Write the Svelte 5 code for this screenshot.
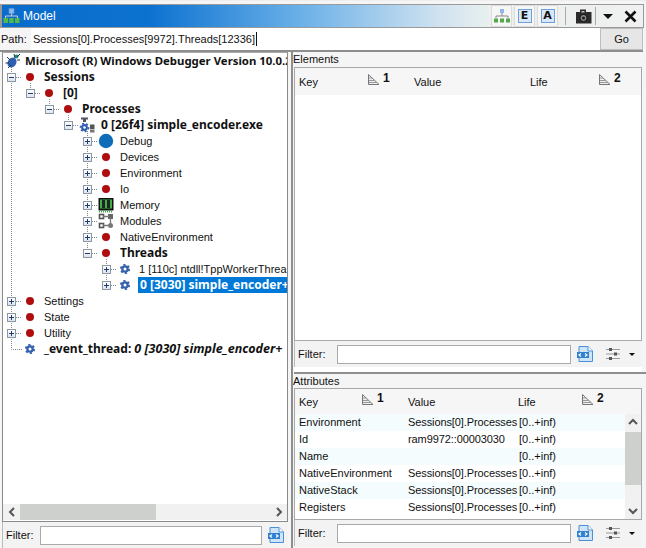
<script lang="ts">
	type Node = { label: string; depth: number; toggle?: '+' | '-'; icon: string; bold?: boolean; selected?: boolean };

	const tree: Node[] = [
		{ label: 'Sessions', depth: 0, toggle: '-', icon: 'dot', bold: true },
		{ label: '[0]', depth: 1, toggle: '-', icon: 'dot', bold: true },
		{ label: 'Processes', depth: 2, toggle: '-', icon: 'dot', bold: true },
		{ label: '0 [26f4] simple_encoder.exe', depth: 3, toggle: '-', icon: 'process', bold: true },
		{ label: 'Debug', depth: 4, toggle: '+', icon: 'bigdot' },
		{ label: 'Devices', depth: 4, toggle: '+', icon: 'dot' },
		{ label: 'Environment', depth: 4, toggle: '+', icon: 'dot' },
		{ label: 'Io', depth: 4, toggle: '+', icon: 'dot' },
		{ label: 'Memory', depth: 4, toggle: '+', icon: 'chip' },
		{ label: 'Modules', depth: 4, toggle: '+', icon: 'modules' },
		{ label: 'NativeEnvironment', depth: 4, toggle: '+', icon: 'dot' },
		{ label: 'Threads', depth: 4, toggle: '-', icon: 'dot', bold: true },
		{ label: '1 [110c] ntdll!TppWorkerThrea', depth: 5, toggle: '+', icon: 'gear' },
		{ label: '0 [3030] simple_encoder+', depth: 5, toggle: '+', icon: 'gear', bold: true, selected: true },
		{ label: 'Settings', depth: 0, toggle: '+', icon: 'dot' },
		{ label: 'State', depth: 0, toggle: '+', icon: 'dot' },
		{ label: 'Utility', depth: 0, toggle: '+', icon: 'dot' }
	];

	const attrs = [
		['Environment', 'Sessions[0].Processes'],
		['Id', 'ram9972::00003030'],
		['Name', ''],
		['NativeEnvironment', 'Sessions[0].Processes'],
		['NativeStack', 'Sessions[0].Processes'],
		['Registers', 'Sessions[0].Processes']
	];
</script>

{#snippet sortIcon()}
	<svg class="sort" width="13" height="13" viewBox="0 0 13 13">
		<path d="M1.5 1.5V11.5H12L1.5 1.5Z" fill="#eee" stroke="#777" />
		<path d="M2 5H5M2 7.5H8M2 9.5H10" stroke="#999" />
	</svg>
{/snippet}

{#snippet filterIcon()}
	<svg width="18" height="18" viewBox="0 0 18 18">
		<path d="M3 1.5H12L16.5 6V16.5H3Z" fill="#cfe4f7" stroke="#4a90d9" />
		<path d="M12 1.5V6H16.5" fill="#fff" stroke="#4a90d9" />
		<rect x="1" y="7" width="12" height="6" fill="#2f80d0" />
		<path d="M5 8.5L3 10L5 11.5M9 8.5L11 10L9 11.5" fill="none" stroke="#fff" stroke-width="1.2" />
	</svg>
{/snippet}

{#snippet filterBar(extra: boolean)}
	<div class="filter" class:wide={extra}>
		<span class="filter-label">Filter:</span>
		<div class="filter-input"></div>
		<span class="filter-btn">{@render filterIcon()}</span>
		{#if extra}
			<svg class="sliders" width="16" height="14" viewBox="0 0 16 14">
				<path d="M1 2.5H15M1 7H15M1 11.5H15" stroke="#9a9a9a" stroke-width="1.2" />
				<rect x="4" y="1" width="3" height="3" fill="#555" />
				<rect x="9" y="5.5" width="3" height="3" fill="#555" />
				<rect x="4" y="10" width="3" height="3" fill="#555" />
			</svg>
			<span class="caret"></span>
		{/if}
	</div>
{/snippet}

{#snippet nodeIcon(kind: string)}
	{#if kind === 'dot'}
		<svg class="ic" width="16" height="16" viewBox="0 0 16 16"><circle cx="8" cy="8" r="4" fill="#b00d0d" /></svg>
	{:else if kind === 'bigdot'}
		<svg class="ic" width="16" height="16" viewBox="0 0 16 16"><circle cx="8" cy="8" r="7.2" fill="#0f6cb8" /></svg>
	{:else if kind === 'gear'}
		<svg class="ic" width="16" height="16" viewBox="0 0 16 16">
			<circle cx="8" cy="8" r="3.8" fill="#3460ad" />
			<circle cx="8" cy="8" r="4.2" fill="none" stroke="#3460ad" stroke-width="1.8" stroke-dasharray="2.2 2.2" />
			<circle cx="8" cy="8" r="1.5" fill="#fff" />
		</svg>
	{:else if kind === 'chip'}
		<svg class="ic" width="16" height="16" viewBox="0 0 16 16">
			<rect x="0.5" y="1" width="15" height="12.5" fill="#111" />
			<rect x="2" y="2.5" width="12" height="9" fill="#3fae49" />
			<rect x="4" y="3" width="3" height="8" fill="#222" />
			<rect x="9" y="3" width="3" height="8" fill="#222" />
			<path d="M1 14.5H15" stroke="#3fae49" stroke-dasharray="1 1" stroke-width="2" />
		</svg>
	{:else if kind === 'modules'}
		<svg class="ic" width="16" height="16" viewBox="0 0 16 16">
			<rect x="1.5" y="1.5" width="4" height="4" fill="#fff" stroke="#555" stroke-width="1.6" />
			<rect x="1.5" y="10.5" width="4" height="4" fill="#fff" stroke="#555" stroke-width="1.6" />
			<rect x="10" y="1" width="5" height="5" fill="#666" />
			<circle cx="12.5" cy="12.5" r="2.5" fill="#777" />
			<path d="M5 3.5H11M12.5 5V11M5 12.5H10" stroke="#777" stroke-width="1.3" />
		</svg>
	{:else if kind === 'process'}
		<svg class="ic" width="16" height="16" viewBox="0 0 16 16">
			<path d="M2 0.5H9V2.5H7V5H4V2.5H2Z" fill="#556" />
			<circle cx="5.5" cy="10.5" r="3.4" fill="#2f5fb0" />
			<circle cx="5.5" cy="10.5" r="4" fill="none" stroke="#2f5fb0" stroke-width="1.6" stroke-dasharray="2 2" />
			<circle cx="5.5" cy="10.5" r="1.3" fill="#fff" />
			<rect x="11" y="7.5" width="4.5" height="4.5" fill="#555" />
			<rect x="11" y="12.5" width="4.5" height="3" fill="#777" />
		</svg>
	{/if}
{/snippet}

<div class="window">
	<header class="titlebar">
		<svg class="title-icon" width="17" height="16" viewBox="0 0 17 16">
			<rect x="6" y="0.5" width="5" height="5" fill="#8fb8ea" stroke="#5d8fd0" stroke-width="0.6" />
			<path d="M8.5 5.5V8M2.5 10V8H14.5V10" fill="none" stroke="#ccd" />
			<rect x="0.5" y="10" width="4.5" height="5" fill="#55b84a" />
			<rect x="6.2" y="10" width="4.5" height="5" fill="#55b84a" />
			<rect x="12" y="10" width="4.5" height="5" fill="#55b84a" />
		</svg>
		<span class="title">Model</span>
		<div class="tools">
			<button class="tool" aria-label="Tree">
				<svg width="18" height="16" viewBox="0 0 18 16">
					<rect x="7" y="1" width="4" height="4" fill="#8fb8ea" />
					<path d="M9 5V8M3 10V8H15V10" fill="none" stroke="#888" />
					<rect x="1" y="10.5" width="4" height="4" fill="#55a84a" />
					<rect x="7" y="10.5" width="4" height="4" fill="#55a84a" />
					<rect x="13" y="10.5" width="4" height="4" fill="#55a84a" />
				</svg>
			</button>
			<button class="tool"><span class="letter">E</span></button>
			<button class="tool"><span class="letter">A</span></button>
			<i class="sep"></i>
			<svg class="camera" width="17" height="16" viewBox="0 0 17 16">
				<path d="M1 4H5V1.5H11V4H16.5V15.5H1Z" fill="#2b2b2b" />
				<rect x="6.5" y="3" width="3" height="1.5" fill="#bbb" />
				<circle cx="8.5" cy="10" r="3.6" fill="#888" stroke="#111" />
				<circle cx="8.5" cy="10" r="1.6" fill="#222" />
			</svg>
			<i class="sep tight"></i>
			<span class="menu-caret"></span>
			<svg class="close" width="13" height="13" viewBox="0 0 13 13">
				<path d="M1.5 1.5L11.5 11.5M11.5 1.5L1.5 11.5" stroke="#111" stroke-width="2.6" />
			</svg>
		</div>
	</header>

	<div class="pathbar">
		<span class="path-label">Path:</span>
		<div class="path-input">Sessions[0].Processes[9972].Threads[12336]<i class="text-caret"></i></div>
		<button class="go">Go</button>
	</div>

	<div class="main">
		<section class="left">
			<div class="tree-box">
				<div class="tree">
					<svg class="guides" width="284" height="310">
						<g fill="none" stroke="#888" stroke-dasharray="1 1">
							<path d="M8.5 14V296.5H19M27.5 30V36M46.5 46V52M65.5 62V68M84.5 78V196M103.5 206V228" />
						</g>
					</svg>
					<div class="row root">
						<svg class="ic bug" width="16" height="16" viewBox="0 0 16 16">
							<ellipse cx="7" cy="9.5" rx="4.2" ry="5.2" transform="rotate(35 7 9.5)" fill="#2f5fb0" />
							<circle cx="11.5" cy="3.5" r="2" fill="#1f8f86" />
							<path d="M2 4L5 7M0.5 10L4 10M3 15L6 12M9 1L10 5M15 1L12 4M15 7L12 7" stroke="#234" />
						</svg>
						<span class="label bold">Microsoft (R) Windows Debugger Version 10.0.2</span>
					</div>
					{#each tree as node}
						<div class="row" style="padding-left: {4 + node.depth * 19}px">
							<span class="toggle">
								<i class="h"></i>
								{#if node.toggle === '+'}<i class="v"></i>{/if}
							</span>
							<span class="stub"></span>
							{@render nodeIcon(node.icon)}
							<span class="label" class:bold={node.bold} class:selected={node.selected}>{node.label}</span>
						</div>
					{/each}
					<div class="row event">
						{@render nodeIcon('gear')}
						<span class="label"><b class="bold">_event_thread:</b> <b class="bold"><em>0 [3030] simple_encoder+</em></b></span>
					</div>
				</div>
				<div class="hscroll">
					<svg width="16" height="16" viewBox="0 0 16 16"><path d="M10 4L6 8L10 12" fill="none" stroke="#555" stroke-width="2" /></svg>
					<div class="track"><div class="thumb"></div></div>
					<svg width="16" height="16" viewBox="0 0 16 16"><path d="M6 4L10 8L6 12" fill="none" stroke="#555" stroke-width="2" /></svg>
				</div>
			</div>
			{@render filterBar(false)}
		</section>

		<section class="right">
			<div class="pane top-pane">
				<div class="pane-title">Elements</div>
				<div class="table">
					<div class="thead">
						<span class="th c1">Key {@render sortIcon()}<b>1</b></span>
						<span class="th c2">Value</span>
						<span class="th c3">Life {@render sortIcon()}<b>2</b></span>
					</div>
				</div>
				{@render filterBar(true)}
				<div class="strip"></div>
			</div>
			<div class="pane bottom-pane">
				<div class="pane-title">Attributes</div>
				<div class="table">
					<div class="thead attr">
						<span class="th c1">Key {@render sortIcon()}<b>1</b></span>
						<span class="th c2">Value</span>
						<span class="th c3">Life {@render sortIcon()}<b>2</b></span>
					</div>
					<div class="body">
						<div class="rows">
							{#each attrs as [key, value], i}
								<div class="tr" class:tint={i % 2 === 0}>
									<span class="c1">{key}</span>
									<span class="c2">{value}</span>
									<span class="c3">[0..+inf)</span>
								</div>
							{/each}
						</div>
						<div class="vscroll">
							<svg width="16" height="16" viewBox="0 0 16 16"><path d="M4 10L8 6L12 10" fill="none" stroke="#555" stroke-width="2" /></svg>
							<div class="vtrack"><div class="vthumb"></div></div>
							<svg width="16" height="16" viewBox="0 0 16 16"><path d="M4 6L8 10L12 6" fill="none" stroke="#555" stroke-width="2" /></svg>
						</div>
					</div>
				</div>
				{@render filterBar(true)}
			</div>
		</section>
	</div>
</div>

<style>
	:global(body) {
		margin: 0;
		background: #fff;
	}

	.window {
		width: 646px;
		height: 548px;
		box-sizing: border-box;
		padding-top: 3px;
		display: flex;
		flex-direction: column;
		overflow: hidden;
		font-family: 'Liberation Sans', Arial, sans-serif;
		font-size: 11px;
		color: #111;
		background: #f5f5f5;
		border-top: 1px solid #eee;
	}

	.titlebar {
		height: 24px;
		flex: none;
		margin-right: 2px;
		box-sizing: border-box;
		border: 1px solid #9a9a9a;
		border-left-width: 2px;
		display: flex;
		align-items: center;
		background: linear-gradient(90deg, #0a6ccb 0%, #0c72d0 23%, #6ab0e8 46.5%, #cfe2f0 68%, #e9f0ee 76%, #f0f0f0 100%);
	}

	.title-icon {
		margin-left: 1px;
	}

	.title {
		color: #fff;
		margin-left: 3px;
		font-size: 12px;
	}

	.tools {
		margin-left: auto;
		display: flex;
		align-items: center;
		height: 100%;
	}

	.tool {
		width: 21px;
		height: 22px;
		margin-right: 2px;
		padding: 0;
		background: #f6f6f6;
		border: 1px solid #dcdcdc;
		display: flex;
		align-items: center;
		justify-content: center;
	}

	.letter {
		width: 14px;
		height: 14px;
		box-sizing: border-box;
		border: 1px solid #6ba0d8;
		background: #d9e8f8;
		color: #111;
		font: bold 11px/12px 'DejaVu Sans', sans-serif;
		text-align: center;
	}

	.sep {
		width: 1px;
		height: 18px;
		background: #aaa;
		margin: 0 9px 0 5px;
	}

	.sep.tight {
		margin: 0 7px 0 3px;
	}

	.menu-caret {
		width: 0;
		height: 0;
		border: 5px solid transparent;
		border-top: 5px solid #111;
		border-bottom: 0;
		margin-right: 11px;
	}

	.close {
		margin-right: 6px;
	}

	.pathbar {
		height: 22px;
		flex: none;
		display: flex;
		align-items: center;
		border-bottom: 2px solid #8e8e8e;
		margin-right: 3px;
		background: #fff;
	}

	.path-label {
		width: 31px;
		height: 100%;
		line-height: 22px;
		padding-left: 1px;
		box-sizing: border-box;
		background: #f5f5f5;
	}

	.path-input {
		flex: 1;
		height: 22px;
		background: #fff;
		padding-left: 2px;
		display: flex;
		align-items: center;
	}

	.text-caret {
		width: 1px;
		height: 14px;
		background: #111;
		margin-left: 1px;
	}

	.go {
		width: 43px;
		height: 22px;
		font: 11px 'Liberation Sans', sans-serif;
		color: #111;
		background: #e6e6e6;
		border: 1px solid #bdbdbd;
		padding: 0;
	}

	.main {
		flex: 1;
		min-height: 0;
		display: grid;
		grid-template-columns: 293px 1fr;
		column-gap: 1px;
	}

	.left,
	.right {
		display: flex;
		flex-direction: column;
		min-height: 0;
	}

	.left {
		padding-left: 2px;
		border-right: 2px solid #8e8e8e;
	}

	.tree-box {
		flex: 1;
		min-height: 0;
		box-sizing: border-box;
		border: 1px solid #8a8a8a;
		border-top-color: #aaa;
		background: #fff;
		display: flex;
		flex-direction: column;
		width: 286px;
	}

	.tree {
		flex: 1;
		overflow: hidden;
		position: relative;
	}

	.guides {
		position: absolute;
		left: 0;
		top: 0;
		pointer-events: none;
	}

	.row {
		height: 16px;
		display: flex;
		align-items: center;
		white-space: nowrap;
		position: relative;
	}

	.root {
		padding-left: 2px;
	}

	.root .label {
		margin-left: 3px;
		font-size: 11.4px;
	}

	.event {
		padding-left: 19px;
	}

	.event em {
		font-size: 12.5px;
	}

	.toggle {
		width: 9px;
		height: 9px;
		flex: none;
		box-sizing: border-box;
		border: 1px solid #8c97a6;
		background: linear-gradient(#fff, #dfe3e8);
		position: relative;
	}

	.toggle .h {
		position: absolute;
		left: 1px;
		right: 1px;
		top: 3px;
		height: 1px;
		background: #1c3c7a;
	}

	.toggle .v {
		position: absolute;
		top: 1px;
		bottom: 1px;
		left: 3px;
		width: 1px;
		background: #1c3c7a;
	}

	.stub {
		width: 6px;
		height: 1px;
		flex: none;
		background: repeating-linear-gradient(90deg, #888 0 1px, transparent 1px 2px);
	}

	.ic {
		flex: none;
	}

	.label {
		margin-left: 5px;
		padding: 0 1px;
		line-height: 16px;
	}

	.bold {
		font-family: 'Noto Sans', sans-serif;
		font-size: 12px;
		font-weight: 700;
	}

	.selected {
		background: #0078d7;
		color: #fff;
		flex: 1;
		overflow: hidden;
		padding-left: 2px;
	}

	.hscroll {
		height: 16px;
		flex: none;
		display: flex;
		align-items: center;
		background: #f1f1f1;
		margin-bottom: 1px;
	}

	.hscroll svg {
		flex: none;
	}

	.hscroll svg:first-child {
		margin-left: 1px;
	}

	.track {
		flex: 1;
		height: 16px;
		display: flex;
	}

	.thumb {
		width: 136px;
		background: #cdd0cd;
	}

	.filter {
		height: 26px;
		flex: none;
		display: flex;
		align-items: center;
		gap: 5px;
		padding-left: 3px;
		background: #f3f3f3;
		border-left: 1px solid #bbb;
		box-sizing: border-box;
	}

	.left .filter {
		width: 286px;
	}

	.filter-label {
		width: 29px;
		flex: none;
	}

	.filter-input {
		flex: 1;
		height: 19px;
		border: 1px solid #aaa;
		background: #fff;
		box-sizing: border-box;
	}

	.filter-btn {
		display: flex;
		margin-right: 3px;
	}

	.wide .filter-label {
		width: 34px;
	}

	.wide .filter-btn {
		margin-right: 6px;
	}

	.sliders {
		flex: none;
	}

	.caret {
		width: 0;
		height: 0;
		border: 3px solid transparent;
		border-top: 3px solid #111;
		border-bottom: 0;
		margin: 0 7px 0 3px;
	}

	.pane {
		display: flex;
		flex-direction: column;
		padding-right: 4px;
	}

	.top-pane {
		height: 320px;
		flex: none;
	}

	.strip {
		height: 5px;
		flex: none;
		background: #fff;
	}

	.bottom-pane {
		flex: 1;
		min-height: 0;
		border-top: 2px solid #8e8e8e;
		padding-bottom: 2px;
	}

	.pane-title {
		height: 15px;
		line-height: 15px;
		flex: none;
		margin-left: -1px;
	}

	.bottom-pane .pane-title {
		height: 14px;
	}

	.table {
		flex: 1;
		min-height: 0;
		border: 1px solid #a8a8a8;
		background: #fff;
		display: flex;
		flex-direction: column;
	}

	.thead {
		height: 27px;
		flex: none;
		display: flex;
		background: #f6f6f6;
		align-items: center;
		padding-left: 4px;
	}

	.thead.attr {
		height: 25px;
	}

	.th {
		display: flex;
		align-items: center;
		box-sizing: border-box;
	}

	.th :global(.sort) {
		margin: -4px 0 0 auto;
	}

	.th b {
		font-size: 12px;
		margin: -7px 0 0 3px;
		width: 8px;
	}

	.thead .c1 {
		width: 115px;
		padding-right: 23px;
	}

	.thead .c2 {
		width: 116px;
	}

	.thead .c3 {
		width: 92px;
	}

	.thead.attr .c1 {
		width: 109px;
	}

	.thead.attr .c2 {
		width: 110px;
	}

	.thead.attr .c3 {
		width: 87px;
	}

	.tr .c1 {
		width: 109px;
		flex: none;
	}

	.tr .c2 {
		width: 106px;
		flex: none;
		margin-right: 5px;
		letter-spacing: -0.1px;
	}

	.body {
		flex: 1;
		min-height: 0;
		display: flex;
		background: #fff;
	}

	.rows {
		flex: 1;
	}

	.tr {
		height: 17px;
		line-height: 17px;
		display: flex;
		padding-left: 4px;
		white-space: nowrap;
	}

	.tint {
		background: #f4fcfd;
	}

	.vscroll {
		width: 16px;
		flex: none;
		background: #f1f1f1;
		display: flex;
		flex-direction: column;
	}

	.vtrack {
		flex: 1;
		padding-top: 2px;
	}

	.vthumb {
		height: 53px;
		background: #cdd0cd;
	}
</style>
